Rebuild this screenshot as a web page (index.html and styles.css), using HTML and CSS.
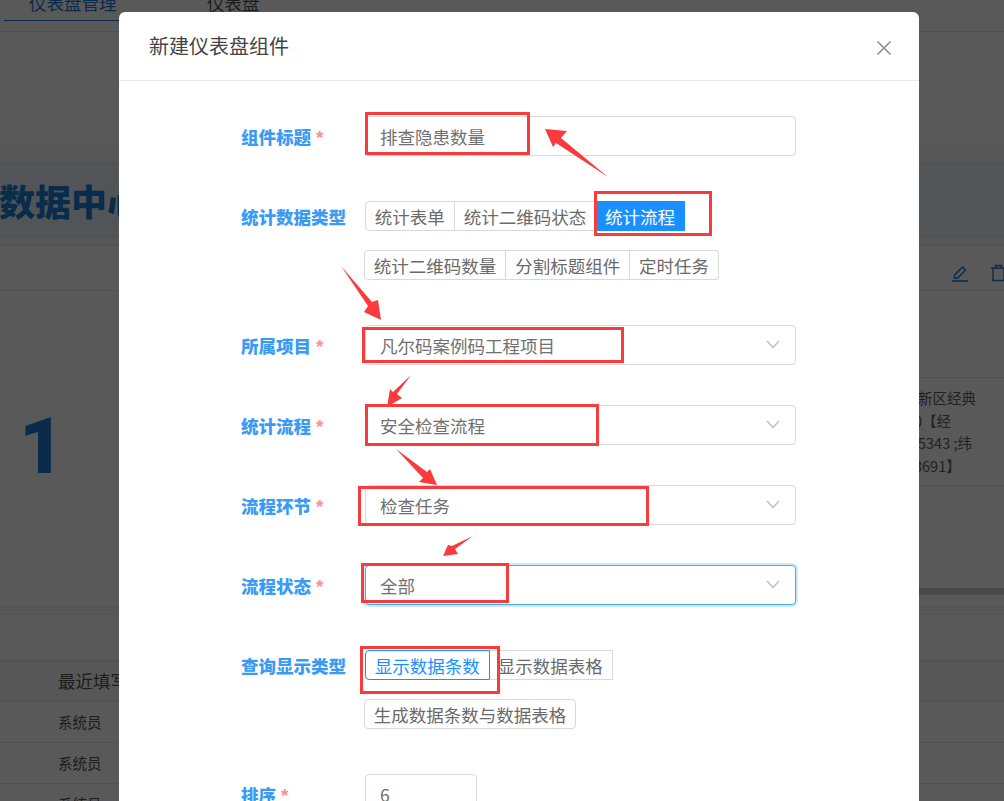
FILE: index.html
```html
<!DOCTYPE html>
<html lang="zh-CN">
<head>
<meta charset="utf-8">
<title>新建仪表盘组件</title>
<link rel="stylesheet" href="styles.css">
</head>
<body>
<div class="page">
  <nav class="tabs">
    <div class="tab tab-active">仪表盘管理</div>
    <div class="tab">仪表盘</div>
  </nav>
  <div class="spacer-top"></div>
  <div class="band"></div>
  <header class="banner">数据中心</header>
  <div class="band band-thin"></div>
  <div class="card-head">
    <svg class="act" width="18" height="18" viewBox="0 0 18 18" fill="none" stroke="currentColor" stroke-width="1.4"><path d="M1 17h16M3.500 14.200v-3.200L11.500 3l3 3-8 8.200z"/></svg>
    <svg class="act" width="14" height="18" viewBox="0 0 14 18" fill="none" stroke="currentColor" stroke-width="1.4"><path d="M0 4h14M2 4v12.500h11V4M4.500 4V1.500h6V4"/></svg>
  </div>
  <div class="split">
    <div class="stat">1</div>
    <div class="side">
      <div class="side-row side-head"><span class="side-text">址</span></div>
      <div class="side-row side-cell">
        <span class="side-text">新区经典</span>
        <span class="side-text side-out">0【经</span>
        <span class="side-text">5343 ;纬</span>
        <span class="side-text side-out">3691】</span>
      </div>
      <div class="side-fill"></div>
      <div class="scrollbar"></div>
      <div class="side-end"></div>
    </div>
  </div>
  <div class="band band-sep"></div>
  <div class="spacer-mid"></div>
  <div class="t-row t-head">最近填写人</div>
  <div class="t-row">系统员</div>
  <div class="t-row">系统员</div>
  <div class="t-row">系统员</div>
</div>

<div class="mask"></div>

<section class="modal">
  <div class="modal-head">
    <h2 class="modal-title">新建仪表盘组件</h2>
    <svg class="close" width="16" height="16" viewBox="0 0 16 16" fill="none" stroke="#8c8c8c" stroke-width="1.500"><path d="M1.500 1.500l13 13M14.500 1.500l-13 13"/></svg>
  </div>
  <form class="form">
    <div class="item">
      <label class="label">组件标题<i class="req">*</i></label>
      <div class="control"><input class="input" value="排查隐患数量" readonly></div>
    </div>
    <div class="item">
      <label class="label">统计数据类型</label>
      <div class="control">
        <div class="radios">
          <span class="radio">统计表单</span><span class="radio">统计二维码状态</span><span class="radio radio-solid">统计流程</span>
        </div>
        <div class="radios radios-next">
          <span class="radio">统计二维码数量</span><span class="radio">分割标题组件</span><span class="radio">定时任务</span>
        </div>
      </div>
    </div>
    <div class="item">
      <label class="label">所属项目<i class="req">*</i></label>
      <div class="control"><div class="select"><span>凡尔码案例码工程项目</span><svg class="chev" width="14" height="9" viewBox="0 0 14 9" fill="none" stroke="#bfbfbf" stroke-width="1.300"><path d="M1 1l6 6.500L13 1"/></svg></div></div>
    </div>
    <div class="item">
      <label class="label">统计流程<i class="req">*</i></label>
      <div class="control"><div class="select"><span>安全检查流程</span><svg class="chev" width="14" height="9" viewBox="0 0 14 9" fill="none" stroke="#bfbfbf" stroke-width="1.300"><path d="M1 1l6 6.500L13 1"/></svg></div></div>
    </div>
    <div class="item">
      <label class="label">流程环节<i class="req">*</i></label>
      <div class="control"><div class="select"><span>检查任务</span><svg class="chev" width="14" height="9" viewBox="0 0 14 9" fill="none" stroke="#bfbfbf" stroke-width="1.300"><path d="M1 1l6 6.500L13 1"/></svg></div></div>
    </div>
    <div class="item">
      <label class="label">流程状态<i class="req">*</i></label>
      <div class="control"><div class="select select-focus"><span>全部</span><svg class="chev" width="14" height="9" viewBox="0 0 14 9" fill="none" stroke="#bfbfbf" stroke-width="1.300"><path d="M1 1l6 6.500L13 1"/></svg></div></div>
    </div>
    <div class="item">
      <label class="label">查询显示类型</label>
      <div class="control">
        <div class="radios">
          <span class="radio radio-on">显示数据条数</span><span class="radio radio-square">显示数据表格</span>
        </div>
        <div class="radios radios-next">
          <span class="radio">生成数据条数与数据表格</span>
        </div>
      </div>
    </div>
    <div class="item">
      <label class="label">排序<i class="req">*</i></label>
      <div class="control"><input class="input input-num" value="6" readonly></div>
    </div>
  </form>
</section>

<div class="mark mark-1"></div>
<div class="mark mark-2"></div>
<div class="mark mark-3"></div>
<div class="mark mark-4"></div>
<div class="mark mark-5"></div>
<div class="mark mark-6"></div>
<div class="mark mark-7"></div>

<svg class="arrows" width="1004" height="801" viewBox="0 0 1004 801" fill="#f93b3b">
  <polygon points="545,129 567,131 561,138 608,177 556,143 553,147"/>
  <polygon points="341,266 372,302 378,300 381,320 364,312 368,306"/>
  <polygon points="411,375 397,394 402,398 387,407 390,389 393,392"/>
  <polygon points="396,449 427,472 430,469 437,485 419,482 423,478"/>
  <polygon points="473,536 455,549 458,554 443,556 448,545 452,546"/>
</svg>
</body>
</html>
```
FILE: styles.css
```css
* { box-sizing: border-box; }
html, body { margin: 0; height: 100%; }
body {
  position: relative;
  width: 1004px;
  height: 801px;
  overflow: hidden;
  background: #fff;
  font-family: "Noto Sans CJK SC", "Liberation Sans", sans-serif;
  font-size: 17.5px;
  color: #555;
}

/* page behind the dialog */
.page { height: 801px; overflow: hidden; }
.tabs {
  display: flex;
  height: 32px;
  border-bottom: 1px solid #dcdcdc;
  padding-left: 4px;
}
.tab {
  height: 21px;
  width: 115px;
  line-height: 6px;
  padding-left: 25px;
  white-space: nowrap;
}
.tab + .tab { margin-left: 63px; padding-left: 25px; }
.tab-active { color: #1f78d1; border-bottom: 1px solid #1f78d1; }
.spacer-top { height: 111px; }
.band { height: 20px; background: #f5f5f5; }
.banner {
  height: 74px;
  background: #eaf4fc;
  border-top: 1px solid #e6e6e6;
  border-bottom: 1px solid #e6e6e6;
  color: #1a7fd6;
  font-size: 36px;
  font-weight: 900;
  line-height: 72px;
  text-indent: -1px;
  white-space: nowrap;
}
.band-thin { height: 8px; background: #f5f5f5; }
.card-head {
  height: 46px;
  display: flex;
  justify-content: flex-end;
  align-items: flex-start;
  gap: 22px;
  padding: 18px 0 0;
  margin-right: -1px;
  border-top: 1px solid #e8e8e8;
  border-bottom: 1px solid #e8e8e8;
  color: #1f78d1;
}
.act { flex: none; }
.split { height: 315px; display: flex; }
.stat {
  width: 918px;
  flex: none;
  padding: 112px 0 0 19px;
  color: #1a7fd6;
  font-family: Roboto, "Liberation Sans", sans-serif;
  font-size: 78px;
  font-weight: 900;
  line-height: 88px;
}
.side { flex: 1; display: flex; flex-direction: column; color: #5f5f5f; font-size: 14.5px; }
.side-text { display: block; line-height: 22.700px; white-space: nowrap; }
.side-out { margin-left: -4px; }
.side-row { border-bottom: 1px solid #e8e8e8; }
.side-head { height: 87px; padding-top: 31px; margin-left: -13px; }
.side-cell { height: 108px; padding-top: 9px; }
.side-fill { height: 102px; }
.scrollbar { height: 7px; margin-left: -20px; background: #d2d2d2; }
.side-end { flex: 1; }
.band-sep {
  height: 9px;
  background: #fafafa;
  border-top: 1px solid #e8e8e8;
  border-bottom: 1px solid #e8e8e8;
}
.spacer-mid { height: 45px; }
.t-row {
  height: 41px;
  line-height: 40px;
  padding-left: 58px;
  font-size: 14.500px;
  border-bottom: 1px solid #e8e8e8;
  white-space: nowrap;
}
.t-head {
  height: 42px;
  font-size: 17.500px;
  background: #fafafa;
  border-top: 1px solid #e8e8e8;
}

.mask {
  position: absolute;
  inset: 0;
  background: rgba(0, 0, 0, .65);
}

/* dialog */
.modal {
  position: absolute;
  left: 119px;
  top: 12px;
  width: 800px;
  height: 789px;
  overflow: hidden;
  background: #fff;
  border-radius: 6px 6px 0 0;
}
.modal-head {
  height: 69px;
  display: flex;
  justify-content: space-between;
  align-items: center;
  padding: 0 27px 0 30px;
  border-bottom: 1px solid #e8e8e8;
}
.modal-title {
  margin: 0;
  font-size: 20px;
  font-weight: 400;
  line-height: 28px;
  color: #444;
}
.close { margin-top: 3px; }
.form { padding: 35px 0 0 122px; }
.item { display: flex; margin-bottom: 40px; }
.label {
  width: 124px;
  flex: none;
  height: 40px;
  line-height: 42px;
  font-weight: 900;
  color: #3a9bf5;
  white-space: nowrap;
}
.req {
  margin-left: 5px;
  font-style: normal;
  font-size: 19px;
  font-weight: 700;
  color: #ff8f8f;
  font-family: "Liberation Sans", sans-serif;
}
.control { width: 431px; }
.input, .select {
  display: flex;
  align-items: center;
  width: 431px;
  height: 40px;
  padding: 0 14px;
  border: 1px solid #d9d9d9;
  border-radius: 4px;
  background: #fff;
  color: #707070;
  font: inherit;
  outline: none;
}
.input { color: #707070; }
.input-num { width: 112px; }
.select { justify-content: space-between; padding-right: 15px; }
.select-focus {
  border-color: #40a9ff;
  box-shadow: 0 0 0 2px rgba(24, 144, 255, .2);
}
.chev { flex: none; margin-top: -1px; }

.radios { display: flex; height: 40px; align-items: center; }
.radios-next { margin: 9px 0 0 -1px; }
.radio {
  height: 30px;
  line-height: 29px;
  padding: 0 9px 0 8.85px;
  border: 1px solid #d9d9d9;
  border-left-width: 0;
  color: #6a6a6a;
  white-space: nowrap;
}
.radio:first-child { border-left-width: 1px; border-radius: 4px 0 0 4px; }
.radio:last-child { border-radius: 0 4px 4px 0; }
.radio:only-child { border-radius: 4px; }
.radio-solid {
  background: #1890ff;
  border-color: #1890ff;
  color: #fff;
  border-radius: 0 !important;
}
.radio-on { border-color: #1890ff; color: #1890ff; }
.radio-square { border-radius: 0 !important; padding: 0 9px 0 8px; }

/* annotations drawn over the screenshot */
.mark {
  position: absolute;
  border: 3px solid #f93b3b;
}
.mark-1 { left: 365px; top: 112px; width: 165px; height: 43px; }
.mark-2 { left: 594px; top: 191px; width: 118px; height: 45px; }
.mark-3 { left: 362px; top: 327px; width: 262px; height: 36px; }
.mark-4 { left: 365px; top: 404px; width: 234px; height: 42px; }
.mark-5 { left: 358px; top: 486px; width: 291px; height: 40px; }
.mark-6 { left: 361px; top: 563px; width: 148px; height: 40px; }
.mark-7 { left: 360px; top: 646px; width: 140px; height: 48px; }
.arrows { position: absolute; left: 0; top: 0; }
```
